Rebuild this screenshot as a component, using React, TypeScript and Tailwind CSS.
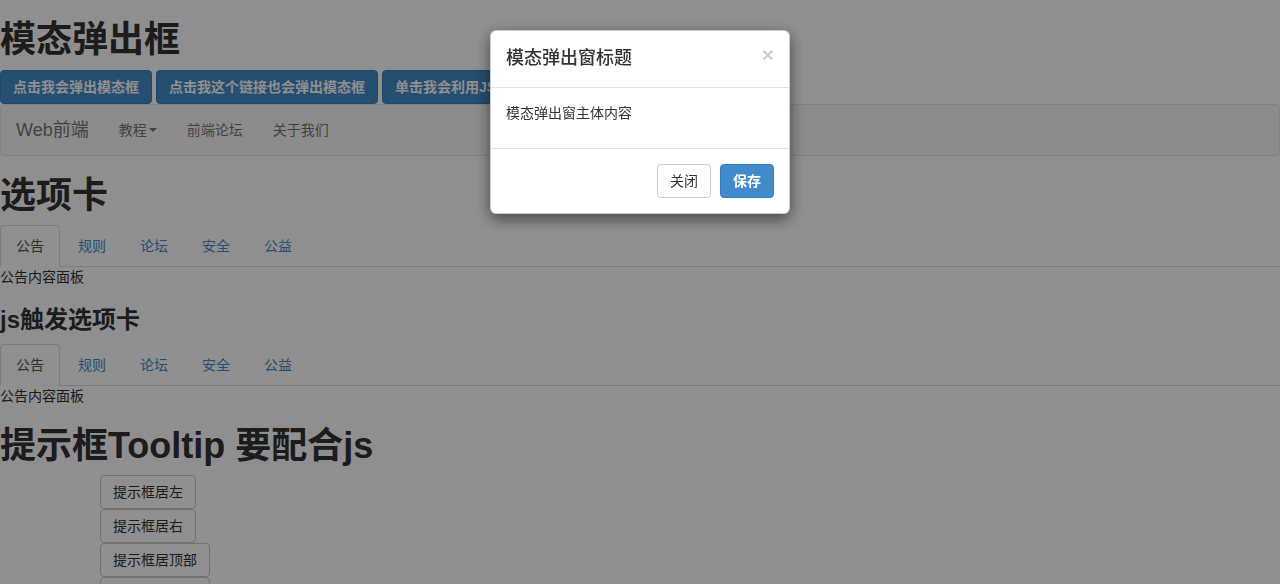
import { FC, ReactNode } from "react";

const font = { fontFamily: '"Liberation Sans", "Noto Sans CJK SC", sans-serif' };

const PrimaryBtn: FC<{ children: ReactNode }> = ({ children }) => (
    <button className="inline-block h-[34px] px-3 text-sm leading-5 font-bold text-white bg-[#428bca] border border-[#357ebd] rounded">
        {children}
    </button>
);

const DefaultBtn: FC<{ children: ReactNode }> = ({ children }) => (
    <button className="inline-block h-[34px] px-3 text-sm leading-5 text-[#333] bg-white border border-[#ccc] rounded">
        {children}
    </button>
);

const tabs = ["公告", "规则", "论坛", "安全", "公益"];

const Tabs: FC = () => (
    <div>
        <ul className="flex border-b border-[#ddd]">
            {tabs.map((tab, index) => (
                <li key={tab} className="-mb-px mr-[2px]">
                    <a
                        className={`block px-[15px] py-[10px] text-sm leading-5 border rounded-t ${
                            index === 0 ? "bg-white text-[#555] border-[#ddd] border-b-transparent" : "text-[#428bca] border-transparent"
                        }`}
                    >
                        {tab}
                    </a>
                </li>
            ))}
        </ul>
        <div className="text-sm leading-5 text-[#333]">公告内容面板</div>
    </div>
);

const App: FC = () => {
    return (
        <div className="relative min-h-[584px] bg-white text-[#333]" style={font}>
            <h1 className="pt-5 pb-[10px] text-[36px] leading-[1.1] font-semibold">模态弹出框</h1>
            <div className="flex gap-1">
                <PrimaryBtn>点击我会弹出模态框</PrimaryBtn>
                <PrimaryBtn>点击我这个链接也会弹出模态框</PrimaryBtn>
                <PrimaryBtn>单击我会利用JS弹出模态框</PrimaryBtn>
            </div>
            <nav className="flex items-center h-[52px] bg-[#f8f8f8] border border-[#e7e7e7] rounded text-[#777]">
                <span className="px-[15px] text-[18px] leading-5">Web前端</span>
                <span className="px-[15px] text-sm leading-5 flex items-center">
                    教程
                    <span className="ml-[2px] w-0 h-0 border-t-4 border-x-4 border-t-[#777] border-x-transparent"></span>
                </span>
                <span className="px-[15px] text-sm leading-5">前端论坛</span>
                <span className="px-[15px] text-sm leading-5">关于我们</span>
            </nav>
            <h1 className="pt-5 pb-[10px] text-[36px] leading-[1.1] font-semibold">选项卡</h1>
            <Tabs />
            <h3 className="pt-5 pb-[10px] text-2xl leading-[1.1] font-semibold">js触发选项卡</h3>
            <Tabs />
            <h1 className="pt-5 pb-[10px] text-[36px] leading-[1.1] font-semibold">提示框Tooltip 要配合js</h1>
            <div className="flex flex-col items-start pl-[100px]">
                <DefaultBtn>提示框居左</DefaultBtn>
                <DefaultBtn>提示框居右</DefaultBtn>
                <DefaultBtn>提示框居顶部</DefaultBtn>
                <DefaultBtn>提示框居底部</DefaultBtn>
            </div>

            <div className="fixed inset-0 bg-[rgba(0,0,0,0.44)]">
                <div className="mx-auto mt-[30px] w-[300px] bg-white border border-black/20 rounded-md shadow-[0_5px_15px_rgba(0,0,0,0.5)]">
                    <div className="flex items-start justify-between p-[15px] border-b border-[#e5e5e5]">
                        <h4 className="text-[18px] leading-[1.42857] font-medium">模态弹出窗标题</h4>
                        <span className="-mt-[2px] text-[21px] leading-none font-bold text-black/20">×</span>
                    </div>
                    <div className="p-[15px]">
                        <p className="mb-[10px] text-sm leading-5">模态弹出窗主体内容</p>
                    </div>
                    <div className="flex justify-end gap-[9px] p-[15px] border-t border-[#e5e5e5]">
                        <DefaultBtn>关闭</DefaultBtn>
                        <PrimaryBtn>保存</PrimaryBtn>
                    </div>
                </div>
            </div>
        </div>
    );
};

export default App;
